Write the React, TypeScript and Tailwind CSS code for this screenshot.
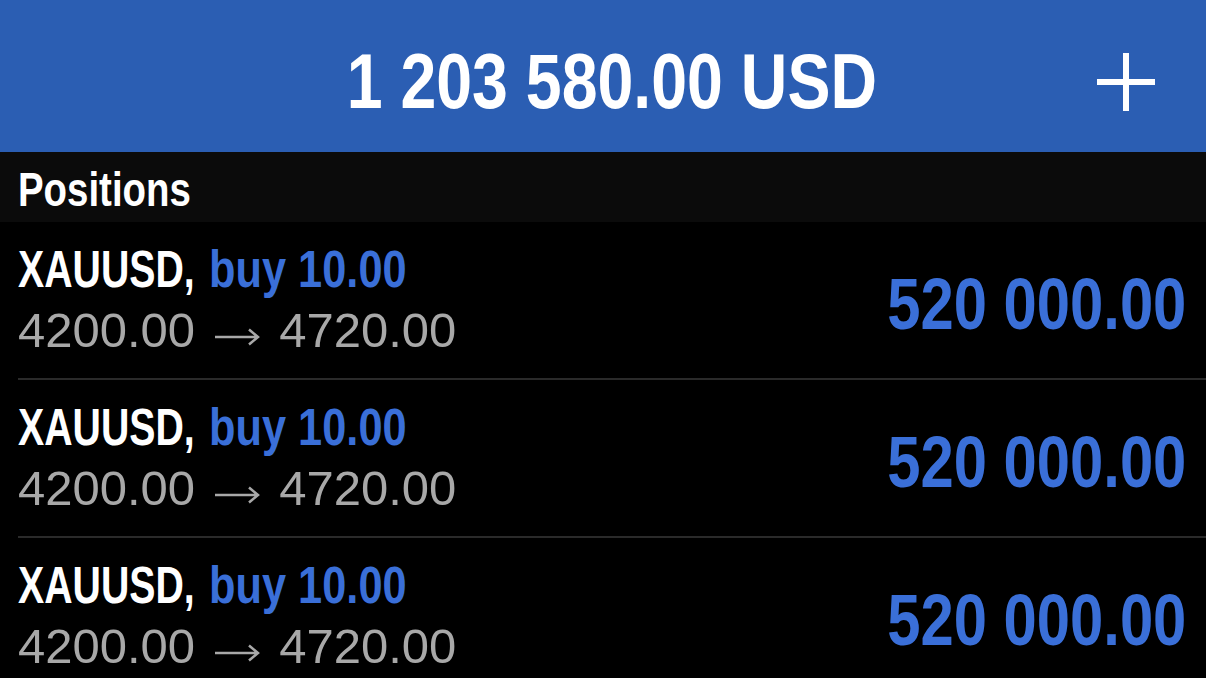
const sans = "font-['Liberation_Sans',Arial,sans-serif]";

const positions = [
  { symbol: 'XAUUSD', side: 'buy', volume: '10.00', open: '4200.00', current: '4720.00', profit: '520 000.00' },
  { symbol: 'XAUUSD', side: 'buy', volume: '10.00', open: '4200.00', current: '4720.00', profit: '520 000.00' },
  { symbol: 'XAUUSD', side: 'buy', volume: '10.00', open: '4200.00', current: '4720.00', profit: '520 000.00' },
];

function Arrow() {
  return (
    <svg
      className="mx-[19px] inline-block align-baseline"
      width="46"
      height="20"
      viewBox="0 0 46 20"
      fill="none"
      stroke="#a8a8a8"
      strokeWidth="2.5"
      aria-label="→"
    >
      <path d="M1 10h43M35 2.5l9 7.5-9 7.5" />
    </svg>
  );
}

function PositionRow({ p }: { p: (typeof positions)[number] }) {
  return (
    <div className="flex h-[158px] shrink-0 items-center justify-between border-b-2 border-[#2a2a2a] pr-[20px]">
      <div className="flex flex-col">
        <div className={`${sans} flex items-baseline text-[51px] leading-[60px] font-bold whitespace-nowrap`}>
          <span className="mr-[-52px] inline-block origin-left scale-x-[0.77] text-white">{p.symbol},</span>
          <span className="ml-[13px] inline-block origin-left scale-x-[0.85] text-[#3a6fd8]">
            {p.side} {p.volume}
          </span>
        </div>
        <div className={`${sans} text-[49px] leading-[60px] whitespace-nowrap text-[#a8a8a8]`}>
          {p.open}
          <Arrow />
          {p.current}
        </div>
      </div>
      <div className={`${sans} origin-right scale-x-[0.83] pt-[8px] text-[72px] leading-none font-bold whitespace-nowrap text-[#3a6fd8]`}>
        {p.profit}
      </div>
    </div>
  );
}

export default function App() {
  return (
    <div className="flex h-[678px] w-[1206px] flex-col overflow-hidden bg-black">
      <header className="relative flex h-[152px] shrink-0 items-center justify-center bg-[#2b5eb3] pt-[10px] pl-[18px]">
        <span className={`${sans} scale-x-[0.837] text-[77px] leading-none font-bold whitespace-nowrap text-white`}>
          1 203 580.00 USD
        </span>
        <svg
          className="absolute top-[52px] right-[50px]"
          width="60"
          height="60"
          viewBox="0 0 60 60"
          fill="none"
          stroke="white"
          strokeWidth="6"
        >
          <path d="M30 1v58M1 30h58" />
        </svg>
      </header>
      <div className="flex h-[70px] shrink-0 items-center bg-[#0b0b0b] px-[18px] pt-[6px]">
        <span className={`${sans} origin-left scale-x-[0.8] text-[48px] leading-none font-bold text-white`}>Positions</span>
      </div>
      <div className="flex flex-col pl-[18px]">
        {positions.map((p, i) => (
          <PositionRow key={i} p={p} />
        ))}
      </div>
    </div>
  );
}
